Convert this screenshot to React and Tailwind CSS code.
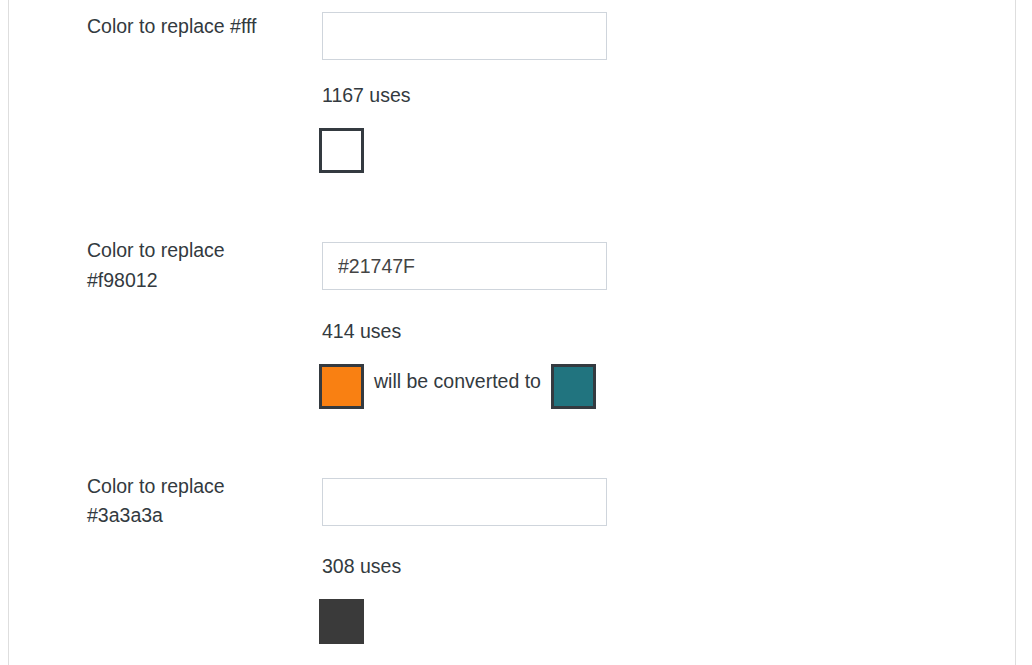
import React from "react";

const sections = [
  { label: "Color to replace #fff", value: "", uses: "1167 uses", from: "#ffffff", to: null, inputOffset: "mt-0", usesGap: "mt-[21px]" },
  { label: "Color to replace #f98012", value: "#21747F", uses: "414 uses", from: "#f98012", to: "#21747F", inputOffset: "mt-[6px]", usesGap: "mt-[22px]" },
  { label: "Color to replace #3a3a3a", value: "", uses: "308 uses", from: "#3a3a3a", to: null, inputOffset: "mt-[6px]", usesGap: "mt-[21px]", noBorder: true },
];

function Swatch({ color, noBorder }) {
  return (
    <div
      className={
        "w-[45px] h-[45px] shrink-0 border-[3px] " +
        (noBorder ? "border-[#3a3a3a]" : "border-[#343a40]")
      }
      style={{ backgroundColor: color }}
    />
  );
}

export default function App() {
  return (
    <div
      className="w-[1032px] h-[665px] overflow-hidden bg-white text-[#333a40] text-[19.5px] leading-[1.5]"
      style={{ fontFamily: '"Liberation Sans", Arial, sans-serif' }}
    >
      <div className="ml-[8px] w-[1008px] h-full border-x border-[#dedede] pt-[12px]">
        {sections.map((s, i) => (
          <div key={i} className={i > 0 ? "mt-[63px]" : ""}>
            <div className="flex items-start">
              <div className="w-[313px] shrink-0 pl-[78px] pr-[40px]">{s.label}</div>
              <div className="flex flex-col">
                <input
                  readOnly
                  value={s.value}
                  className={
                    s.inputOffset +
                    " w-[285px] h-[48px] border border-[#cfd5dc] bg-white px-[15px] text-[19.5px] text-[#444] outline-none"
                  }
                  style={{ fontFamily: '"Liberation Sans", Arial, sans-serif' }}
                />
              </div>
            </div>
            <div className={"ml-[313px] " + s.usesGap}>{s.uses}</div>
            <div className="ml-[310px] mt-[18px] flex items-start">
              <Swatch color={s.from} noBorder={s.noBorder} />
              {s.to && (
                <>
                  <span className="mx-[10px] mt-[3px]">will be converted to</span>
                  <Swatch color={s.to} />
                </>
              )}
            </div>
          </div>
        ))}
      </div>
    </div>
  );
}
